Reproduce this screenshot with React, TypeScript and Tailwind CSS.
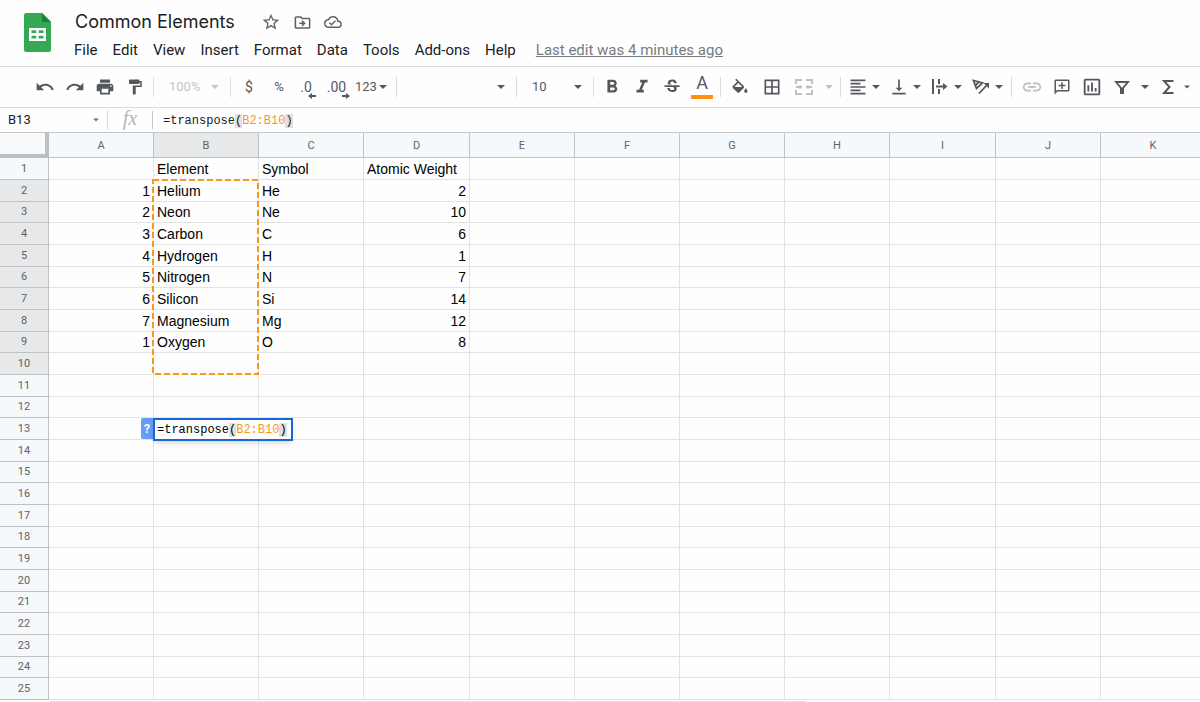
import React from "react";
import {
  MdBorderAll,
  MdFormatAlignLeft,
  MdFormatBold,
  MdFormatItalic,
  MdFormatPaint,
  MdLink,
  MdOutlineAssessment,
  MdOutlineCloudDone,
  MdOutlineDriveFileMove,
  MdPrint,
  MdRedo,
  MdStarOutline,
  MdStrikethroughS,
  MdUndo,
  MdVerticalAlignBottom,
} from "react-icons/md";

const COLUMNS = ["A", "B", "C", "D", "E", "F", "G", "H", "I", "J", "K"];
const ROW_COUNT = 25;
const ACTIVE_COLUMN = "B";

// Values are keyed by cell address
const CELLS: Record<string, string | number> = {
  B1: "Element",
  C1: "Symbol",
  D1: "Atomic Weight",
  A2: 1,
  B2: "Helium",
  C2: "He",
  D2: 2,
  A3: 2,
  B3: "Neon",
  C3: "Ne",
  D3: 10,
  A4: 3,
  B4: "Carbon",
  C4: "C",
  D4: 6,
  A5: 4,
  B5: "Hydrogen",
  C5: "H",
  D5: 1,
  A6: 5,
  B6: "Nitrogen",
  C6: "N",
  D6: 7,
  A7: 6,
  B7: "Silicon",
  C7: "Si",
  D7: 14,
  A8: 7,
  B8: "Magnesium",
  C8: "Mg",
  D8: 12,
  A9: 1,
  B9: "Oxygen",
  C9: "O",
  D9: 8,
};

const MENUS = [
  "File",
  "Edit",
  "View",
  "Insert",
  "Format",
  "Data",
  "Tools",
  "Add-ons",
  "Help",
];

const SheetsLogo: React.FC = () => (
  <svg width="27" height="39" viewBox="0 0 27 39" aria-hidden="true">
    <path
      d="M2.5 0H18l9 9v27.5a2.5 2.5 0 0 1-2.5 2.5h-22A2.5 2.5 0 0 1 0 36.5V2.5A2.5 2.5 0 0 1 2.5 0z"
      fill="#34a853"
    />
    <path d="M18 0l9 9h-9z" fill="#188038" />
    <path
      d="M5 15h17v13H5zM7.5 17.3v2.7h4.8v-2.7zM14.7 17.3v2.7h4.8v-2.7zM7.5 22.7v2.7h4.8v-2.7zM14.7 22.7v2.7h4.8v-2.7z"
      fill="#fff"
      fillRule="evenodd"
    />
  </svg>
);

const IconButton: React.FC<
  React.PropsWithChildren<{ label: string; className?: string }>
> = ({ label, className = "w-[30px]", children }) => (
  <button
    aria-label={label}
    className={`flex h-7 shrink-0 items-center justify-center ${className}`}
  >
    {children}
  </button>
);

const Caret: React.FC<{ className?: string }> = ({ className = "" }) => (
  <svg
    width="8"
    height="4"
    viewBox="0 0 8 4"
    className={`shrink-0 ${className}`}
    aria-hidden="true"
  >
    <path d="M0 0h8L4 4z" fill="currentColor" />
  </svg>
);

const SplitButton: React.FC<React.PropsWithChildren<{ label: string }>> = ({
  label,
  children,
}) => (
  <button
    aria-label={label}
    className="flex h-7 w-[41px] shrink-0 items-center gap-1 pl-1"
  >
    {children}
    <Caret />
  </button>
);

const Divider: React.FC = () => (
  <div className="mx-[3px] h-5 w-px shrink-0 bg-[#dadce0]" />
);

const ToolbarSelect: React.FC<{
  label: string;
  value: string;
  className: string;
}> = ({ label, value, className }) => (
  <div className={`relative flex h-7 shrink-0 items-center ${className}`}>
    <select
      aria-label={label}
      className="h-full w-full appearance-none bg-transparent pl-3 text-[13px] outline-none"
    >
      <option>{value}</option>
    </select>
    <Caret className="pointer-events-none absolute right-2" />
  </div>
);

const DecimalIcon: React.FC<{ digits: string; increase?: boolean }> = ({
  digits,
  increase,
}) => (
  <span className="relative text-sm leading-5">
    {digits}
    <svg
      width="8"
      height="6"
      viewBox="0 0 8 6"
      className="absolute -right-1 -bottom-0.5"
      aria-hidden="true"
    >
      <path
        d={increase ? "M0 2h4V0l4 3-4 3V4H0z" : "M8 2H4V0L0 3l4 3V4h4z"}
        fill="currentColor"
      />
    </svg>
  </span>
);

const FillIcon: React.FC = () => (
  <svg width="20" height="20" viewBox="0 0 24 24" aria-hidden="true">
    <path
      d="M16.56 8.94L7.62 0 6.210 1.410l2.380 2.380-5.150 5.150c-.59.59-.59 1.540 0 2.120l5.500 5.500c.29.29.68.44 1.060.44s.77-.15 1.060-.44l5.500-5.500c.59-.58.59-1.530 0-2.120zM5.210 10L10 5.210 14.790 10H5.210zM19 11.500s-2 2.170-2 3.500c0 1.100.9 2 2 2s2-.9 2-2c0-1.330-2-3.500-2-3.500z"
      transform="translate(0 2)"
      fill="currentColor"
    />
  </svg>
);

const MergeIcon: React.FC = () => (
  <svg width="20" height="20" viewBox="0 0 20 20" aria-hidden="true">
    <path
      d="M2 7V3h6M12 3h6v4M2 13v4h6M12 17h6v-4M2 10h4M14 10h4"
      fill="none"
      stroke="currentColor"
      strokeWidth="2"
    />
    <path d="M5.500 7.500L8.500 10l-3 2.500zM14.500 7.500L11.500 10l3 2.500z" fill="currentColor" />
  </svg>
);

const OverflowIcon: React.FC = () => (
  <svg width="20" height="20" viewBox="0 0 20 20" aria-hidden="true">
    <path
      d="M3 2v15M9 2v5M9 12v5M6 9.500h9"
      fill="none"
      stroke="currentColor"
      strokeWidth="2"
    />
    <path d="M13 6l4.500 3.500L13 13z" fill="currentColor" />
  </svg>
);

const RotateIcon: React.FC = () => (
  <svg width="20" height="20" viewBox="0 0 20 20" aria-hidden="true">
    <path
      d="M5.500 11.500L2.500 3.500l9 2.500zM8 4.800l-3.700 3.700M8 16.500l7.500-8"
      fill="none"
      stroke="currentColor"
      strokeWidth="1.800"
    />
    <path d="M12.500 6H18v5.500z" fill="currentColor" />
  </svg>
);

const CommentIcon: React.FC = () => (
  <svg width="18" height="18" viewBox="0 0 24 24" aria-hidden="true">
    <path
      d="M20 2H4c-1.100 0-2 .9-2 2v18l4-4h14c1.100 0 2-.9 2-2V4c0-1.100-.9-2-2-2zm0 14H5.170L4 17.170V4h16v12zM13 5.500h-2V9H7.500v2H11v3.500h2V11h3.500V9H13z"
      fill="currentColor"
    />
  </svg>
);

const FilterIcon: React.FC = () => (
  <svg width="16" height="16" viewBox="0 0 16 16" aria-hidden="true">
    <path
      d="M0 2h16l-6 7.200V15H6V9.200zM4 4l4 4.800L12 4z"
      fill="currentColor"
      fillRule="evenodd"
    />
  </svg>
);

const SigmaIcon: React.FC = () => (
  <svg width="12" height="16" viewBox="0 0 12 16" aria-hidden="true">
    <path
      d="M11.500 2H2l5.500 6L2 14h9.500"
      fill="none"
      stroke="currentColor"
      strokeWidth="2"
    />
  </svg>
);

const Formula: React.FC = () => (
  <>
    =transpose<span className="bg-[#e0e0e0]">(</span>
    <span className="text-[#f7981d]">B2:B10</span>
    <span className="bg-[#e0e0e0]">)</span>
  </>
);

const TitleBar: React.FC = () => (
  <header className="flex h-[66px] items-start pl-6 text-[#202124]">
    <a href="#" aria-label="Sheets home" className="mt-[13px]">
      <SheetsLogo />
    </a>
    <div className="ml-4 pt-2">
      <div className="flex h-7 items-center pl-2">
        <h1 className="font-['Inter','Google_Sans',sans-serif] text-lg leading-7 whitespace-nowrap">
          Common Elements
        </h1>
        <div className="ml-[26px] flex items-center gap-3 text-[#5f6368]">
          <button aria-label="Star">
            <MdStarOutline size={20} />
          </button>
          <button aria-label="Move">
            <MdOutlineDriveFileMove size={19} />
          </button>
          <button aria-label="Saved to Drive">
            <MdOutlineCloudDone size={18} />
          </button>
        </div>
      </div>
      <nav className="flex h-7 items-center gap-px text-[15px] whitespace-nowrap">
        {MENUS.map((menu) => (
          <button key={menu} className="px-[7px]">
            {menu}
          </button>
        ))}
        <a href="#" className="ml-3 text-[#777b80] underline">
          Last edit was 4 minutes ago
        </a>
      </nav>
    </div>
  </header>
);

const Toolbar: React.FC = () => (
  <div
    role="toolbar"
    className="flex h-[42px] items-center overflow-hidden border-y border-[#dadce0] pl-[30px] text-[#54585d]"
  >
    <IconButton label="Undo">
      <MdUndo size={20} />
    </IconButton>
    <IconButton label="Redo">
      <MdRedo size={20} />
    </IconButton>
    <IconButton label="Print">
      <MdPrint size={20} />
    </IconButton>
    <IconButton label="Paint format">
      <MdFormatPaint size={18} />
    </IconButton>
    <Divider />
    <ToolbarSelect
      label="Zoom"
      value="100%"
      className="w-[70px] text-[#c4c6c8]"
    />
    <Divider />
    <IconButton label="Format as currency">
      <span className="text-sm">$</span>
    </IconButton>
    <IconButton label="Format as percent">
      <span className="text-[13px]">%</span>
    </IconButton>
    <IconButton label="Decrease decimal places" className="w-6">
      <DecimalIcon digits=".0" />
    </IconButton>
    <IconButton label="Increase decimal places" className="w-[37px]">
      <DecimalIcon digits=".00" increase />
    </IconButton>
    <button className="flex h-7 w-[38px] shrink-0 items-center gap-0.5 text-[13px]">
      123
      <Caret />
    </button>
    <Divider />
    <ToolbarSelect label="Font" value="" className="w-[113px]" />
    <Divider />
    <ToolbarSelect label="Font size" value="10" className="w-[70px]" />
    <Divider />
    <IconButton label="Bold">
      <MdFormatBold size={22} />
    </IconButton>
    <IconButton label="Italic">
      <MdFormatItalic size={22} />
    </IconButton>
    <IconButton label="Strikethrough">
      <MdStrikethroughS size={20} />
    </IconButton>
    <IconButton label="Text color">
      <span className="flex h-6 w-[22px] flex-col items-center border-b-4 border-[#ff9011] text-lg leading-4">
        A
      </span>
    </IconButton>
    <Divider />
    <IconButton label="Fill color" className="w-8">
      <FillIcon />
    </IconButton>
    <IconButton label="Borders" className="w-8">
      <MdBorderAll size={20} />
    </IconButton>
    <IconButton label="Merge cells" className="w-8 text-[#bfc1c3]">
      <MergeIcon />
    </IconButton>
    <IconButton label="Merge options" className="w-[17px] text-[#bfc1c3]">
      <Caret />
    </IconButton>
    <Divider />
    <SplitButton label="Horizontal align">
      <MdFormatAlignLeft size={20} />
    </SplitButton>
    <SplitButton label="Vertical align">
      <MdVerticalAlignBottom size={20} />
    </SplitButton>
    <SplitButton label="Text wrapping">
      <OverflowIcon />
    </SplitButton>
    <SplitButton label="Text rotation">
      <RotateIcon />
    </SplitButton>
    <Divider />
    <IconButton label="Insert link" className="ml-0.5 w-[30px] text-[#bfc1c3]">
      <MdLink size={22} />
    </IconButton>
    <IconButton label="Insert comment">
      <CommentIcon />
    </IconButton>
    <IconButton label="Insert chart">
      <MdOutlineAssessment size={22} />
    </IconButton>
    <IconButton label="Create a filter">
      <FilterIcon />
    </IconButton>
    <IconButton label="Filter views" className="w-4">
      <Caret />
    </IconButton>
    <IconButton label="Functions">
      <SigmaIcon />
    </IconButton>
    <IconButton label="More functions" className="w-2">
      <Caret className="w-1.5" />
    </IconButton>
  </div>
);

const FormulaBar: React.FC = () => (
  <div className="flex h-[25px] items-center border-b border-[#c4c7c9] text-[#202124]">
    <div className="flex h-full w-[107px] items-center">
      <input
        aria-label="Name box"
        defaultValue="B13"
        className="w-[93px] bg-transparent pl-2 text-[13px] outline-none"
      />
      <Caret className="w-1.5 text-[#777b80]" />
    </div>
    <div className="h-5 w-px bg-[#dadce0]" />
    <span className="h-5 w-[44px] text-center font-['Liberation_Serif',serif] text-xl leading-4 text-[#b4b6b8] italic">
      fx
    </span>
    <div className="h-[18px] w-px bg-[#c4c7c9]" />
    <div
      role="textbox"
      aria-label="Formula bar"
      className="flex-1 pt-px pl-2.5 font-['Liberation_Mono',monospace] text-xs"
    >
      <Formula />
    </div>
  </div>
);

// Dashed outline over B2:B10, the range being referenced
const RangeOutline: React.FC = () => (
  <svg
    width="107"
    height="196"
    className="pointer-events-none absolute -top-px -left-0.5 z-10"
    aria-hidden="true"
  >
    <rect
      x="1"
      y="1"
      width="105"
      height="194"
      fill="none"
      stroke="#f7981d"
      strokeWidth="2"
      strokeDasharray="6 3"
    />
  </svg>
);

const CellEditor: React.FC = () => (
  <div className="absolute top-0 -left-[13px] z-10 flex items-start">
    <button
      aria-label="Formula help"
      className="h-[21px] w-3 rounded-l-xs bg-[#669df6] text-center font-['Roboto',sans-serif] text-xs font-bold text-white"
    >
      ?
    </button>
    <div
      role="textbox"
      aria-label="Cell editor"
      className="h-[23px] w-[140px] border-2 border-[#1967d2] bg-white pl-0.5 font-['Liberation_Mono',monospace] text-xs leading-5 shadow-md"
    >
      <Formula />
    </div>
  </div>
);

const Cell: React.FC<{ address: string }> = ({ address }) => {
  const value = CELLS[address];
  return (
    <td
      className={`relative border-r border-b border-[#e2e3e3] px-[3px] py-0 leading-5 whitespace-nowrap ${
        typeof value === "number" ? "text-right" : "text-left"
      }`}
    >
      {value}
      {address === "B2" && <RangeOutline />}
      {address === "B13" && <CellEditor />}
    </td>
  );
};

const Grid: React.FC = () => (
  <table className="w-[calc(100%+6px)] table-fixed border-separate border-spacing-0 font-['Liberation_Sans',Arial,sans-serif] text-sm text-black">
    <colgroup>
      <col className="w-[49px]" />
      {COLUMNS.map((column, index) => (
        <col
          key={column}
          className={
            column === "K"
              ? ""
              : index % 5 === 3
              ? "w-[106px]"
              : "w-[105px]"
          }
        />
      ))}
    </colgroup>
    <thead>
      <tr className="h-[25px]">
        <td className="border-r-4 border-b-4 border-[#bcbec0] bg-[#f8f9fa] p-0" />
        {COLUMNS.map((column) => (
          <th
            key={column}
            scope="col"
            className={`border-r border-b border-[#c0c2c4] px-0 pt-0.5 pb-0 font-['Roboto',sans-serif] text-[11px] leading-4 font-normal text-[#5f6368] ${
              column === ACTIVE_COLUMN ? "bg-[#e6e8e9]" : "bg-[#f6f9fb]"
            }`}
          >
            {column}
          </th>
        ))}
      </tr>
    </thead>
    <tbody>
      {Array.from({ length: ROW_COUNT }, (_, i) => i + 1).map((row) => (
        <tr key={row} className={row % 3 === 0 ? "h-[21px]" : "h-[22px]"}>
          <th
            scope="row"
            className={`border-r border-b border-[#c0c2c4] p-0 font-['Roboto',sans-serif] text-[11px] leading-4 font-normal text-[#5f6368] ${
              row >= 2 && row <= 10 ? "bg-[#e6e8e9]" : "bg-[#f6f9fb]"
            }`}
          >
            {row}
          </th>
          {COLUMNS.map((column) => (
            <Cell key={column} address={`${column}${row}`} />
          ))}
        </tr>
      ))}
    </tbody>
  </table>
);

export default function App() {
  return (
    <div className="overflow-hidden bg-[#fefefe] font-['Roboto',sans-serif]">
      <TitleBar />
      <Toolbar />
      <FormulaBar />
      <Grid />
      <div className="mt-px ml-[50px] h-px w-[63%] bg-[#e2e3e3]" />
    </div>
  );
}
